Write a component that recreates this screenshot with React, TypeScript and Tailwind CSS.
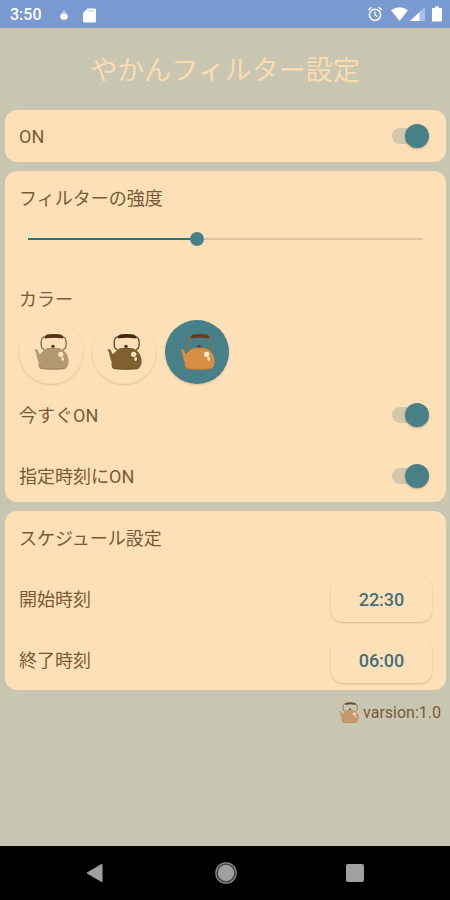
import { useState } from 'react';
import type { CSSProperties, ReactNode } from 'react';

type Palette = { body: string; shade: string; wire: string; grip: string; shine: string };

const kettles: { id: string; label: string; palette: Palette }[] = [
  { id: 'light', label: 'ライト', palette: { body: '#b29772', shade: '#9d8260', wire: '#8a6b4a', grip: '#5a2f14', shine: '#fbe3c3' } },
  { id: 'dark', label: 'ダーク', palette: { body: '#80602f', shade: '#6d4f26', wire: '#65431f', grip: '#4a2410', shine: '#fbe3c3' } },
  { id: 'copper', label: 'カッパー', palette: { body: '#d88e44', shade: '#c67c36', wire: '#8f6b42', grip: '#643c1c', shine: '#fdebd2' } },
];

const footerPalette: Palette = { body: '#c59a6b', shade: '#a97d52', wire: '#7b6248', grip: '#66482c', shine: '#efdcc0' };

function Kettle({ palette, className }: { palette: Palette; className: string }) {
  return (
    <svg viewBox="0 0 105 108" className={className} aria-hidden="true">
      <path
        d="M30 47L24 42C20 34 21 18 25 12Q28 8 36 7H81Q90 8 93 12C97 18 98 34 94 42L88 47"
        fill="none"
        stroke={palette.wire}
        strokeWidth="4"
        strokeLinecap="round"
        strokeLinejoin="round"
      />
      <path d="M32 12C31 5 37 2 45 1Q59 -1 74 1C82 2 89 5 88 12Q86 14 82 13Q60 9 38 13Q33 14 32 12Z" fill={palette.grip} />
      <circle cx="57" cy="37" r="5" fill={palette.grip} />
      <path d="M1 47Q8 44 12 49C14 54 14 59 17 60C24 57 27 49 36 44Q57 38 80 44C94 50 104 64 104 82Q104 97 94 104Q58 108 22 105Q13 98 14 84C11 77 8 68 7 60Q6 52 1 47Z" fill={palette.body} />
      <path d="M14 88Q15 98 23 102Q58 105 94 102L91 106Q57 109 20 105Q12 99 14 88Z" fill={palette.shade} />
      <path d="M36 45Q57 40 80 45" fill="none" stroke={palette.shade} strokeWidth="2" />
      <ellipse cx="80" cy="61" rx="8" ry="8" fill={palette.shine} />
      <ellipse cx="86" cy="75" rx="4" ry="6" fill={palette.shine} />
    </svg>
  );
}

function Card({ children }: { children: ReactNode }) {
  return <section className="rounded-xl bg-[#fee0b8] pl-3.5 pr-[18px]">{children}</section>;
}

function SwitchRow({ id, label }: { id: string; label: string }) {
  const [on, setOn] = useState(true);
  return (
    <div className="flex h-12 items-center justify-between">
      <label htmlFor={id} className="pt-0.5">{label}</label>
      <input
        id={id}
        type="checkbox"
        role="switch"
        checked={on}
        onChange={(e) => setOn(e.target.checked)}
        className="relative h-6 w-9 cursor-pointer appearance-none before:absolute before:inset-x-0 before:top-1 before:h-4 before:rounded-full before:bg-[#d2c8a9] after:absolute after:left-0 after:top-0 after:size-6 after:rounded-full after:bg-[#f1efe6] after:shadow-[0_1px_2px_rgba(80,60,30,0.35)] checked:after:left-[13px] checked:after:bg-[#488088]"
      />
    </div>
  );
}

function TimeRow({ label, time }: { label: string; time: string }) {
  return (
    <div className="flex h-12 items-center justify-between">
      <span className="pt-0.5">{label}</span>
      <button
        type="button"
        aria-label={`${label} ${time}`}
        className="-mr-1 h-[45px] w-[101px] rounded-xl bg-[#fee0b8] pt-0.5 font-medium text-[#44707a] shadow-[0_1px_2px_rgba(120,85,40,0.3)]"
      >
        {time}
      </button>
    </div>
  );
}

function StatusBar() {
  return (
    <div className="flex h-7 items-center justify-between bg-[#7999d1] pl-2.5 pr-2 text-white">
      <div className="flex items-center pt-0.5">
        <span className="w-[50px] text-base font-medium">3:50</span>
        <svg viewBox="0 0 8 12" className="h-3 w-2" aria-hidden="true">
          <path d="M2 4Q4 0 6 4" fill="none" stroke="#dbe6fa" strokeWidth="1" />
          <ellipse cx="4" cy="7.5" rx="3.8" ry="3.2" fill="#fff" />
        </svg>
        <svg viewBox="0 0 13 15" className="ml-[15px] h-[15px] w-[13px]" aria-hidden="true">
          <path d="M4.5 0.5H11.5Q13 0.5 13 2V13Q13 14.5 11.5 14.5H1.5Q0 14.5 0 13V5Z" fill="#fff" />
          <path d="M4.5 3H11" stroke="#a9bfe6" strokeWidth="1" />
        </svg>
      </div>
      <div className="flex items-center">
        <svg viewBox="0 0 16 16" className="size-4" fill="none" stroke="#fff" aria-hidden="true">
          <circle cx="8" cy="8.8" r="5.6" strokeWidth="1.5" />
          <path d="M1.3 4L4.5 1.3M14.7 4L11.5 1.3" strokeWidth="1.5" />
          <path d="M8 5.5V9L10.3 10.8" strokeWidth="1.3" />
        </svg>
        <svg viewBox="0 0 17 14" className="ml-2 h-3.5 w-[17px]" aria-hidden="true">
          <path d="M0 3.2Q8.5 -2.8 17 3.2L8.5 14Z" fill="#fff" />
        </svg>
        <svg viewBox="0 0 15 14" className="ml-0.5 h-3.5 w-[15px]" aria-hidden="true">
          <path d="M0 14L15 0V14Z" fill="#a9bfe5" />
          <path d="M0 14L9.5 5V14Z" fill="#fff" />
        </svg>
        <svg viewBox="0 0 10 16" className="ml-[7px] h-4 w-2.5" aria-hidden="true">
          <path d="M3 0.5H7V2H9Q10 2 10 3V14.5Q10 15.5 9 15.5H1Q0 15.5 0 14.5V3Q0 2 1 2H3Z" fill="#fff" />
        </svg>
      </div>
    </div>
  );
}

export default function App() {
  const [strength, setStrength] = useState(85);
  const [color, setColor] = useState('copper');
  const fill = { '--fill': `${strength / 2}%` } as CSSProperties;

  return (
    <div
      lang="ja"
      className="flex min-h-screen flex-col bg-[#c8c5b0] font-[Roboto,'Noto_Sans_CJK_JP',sans-serif] text-lg text-[#775a37]"
    >
      <StatusBar />
      <header className="flex h-[82px] items-center justify-center pt-1">
        <h1 className="text-[27px] text-[#fbdbb0]">やかんフィルター設定</h1>
      </header>
      <main className="flex flex-1 flex-col gap-[9px] pl-[5px] pr-1">
        <Card>
          <div className="py-0.5">
            <SwitchRow id="power" label="ON" />
          </div>
        </Card>

        <Card>
          <label htmlFor="strength" className="flex h-[54px] items-center pt-0.5">
            フィルターの強度
          </label>
          <div className="flex h-7 items-center pl-[9px] pr-[5px]">
            <input
              id="strength"
              type="range"
              min={0}
              max={200}
              value={strength}
              onChange={(e) => setStrength(Number(e.target.value))}
              style={fill}
              className="h-3.5 w-full cursor-pointer appearance-none bg-[linear-gradient(to_right,#267780_var(--fill),#dcc4a0_var(--fill))] bg-[length:100%_2px] bg-center bg-no-repeat [&::-webkit-slider-thumb]:size-3.5 [&::-webkit-slider-thumb]:appearance-none [&::-webkit-slider-thumb]:rounded-full [&::-webkit-slider-thumb]:bg-[#488088]"
            />
          </div>
          <div role="radiogroup" aria-labelledby="color-heading" className="pt-[31px]">
            <h2 id="color-heading" className="pt-0.5 leading-7">カラー</h2>
            <div className="flex gap-[9px] pt-1.5">
              {kettles.map((k) => (
                <label
                  key={k.id}
                  className="flex size-16 cursor-pointer items-center justify-center rounded-full bg-[#fee0b8] shadow-[0_1px_2px_rgba(120,85,40,0.25)] has-checked:bg-[#478088]"
                >
                  <input
                    type="radio"
                    name="color"
                    aria-label={k.label}
                    checked={color === k.id}
                    onChange={() => setColor(k.id)}
                    className="sr-only"
                  />
                  <Kettle palette={k.palette} className="h-9 w-[35px]" />
                </label>
              ))}
            </div>
          </div>
          <div className="flex flex-col gap-[13px] pb-0.5 pt-[7px]">
            <SwitchRow id="now" label="今すぐON" />
            <SwitchRow id="scheduled" label="指定時刻にON" />
          </div>
        </Card>

        <Card>
          <h2 className="flex h-[54px] items-center pt-0.5">スケジュール設定</h2>
          <div className="flex flex-col gap-[13px] pb-1.5 pt-2.5">
            <TimeRow label="開始時刻" time="22:30" />
            <TimeRow label="終了時刻" time="06:00" />
          </div>
        </Card>

        <footer className="flex items-center justify-end gap-1 pr-[5px] text-base">
          <Kettle palette={footerPalette} className="h-[21px] w-5" />
          <span className="pt-0.5">varsion:1.0</span>
        </footer>
      </main>

      <nav className="flex h-[54px] items-center justify-between bg-black pl-[85px] pr-[84px]">
        <button type="button" aria-label="戻る" className="flex size-[22px] items-center justify-center">
          <svg viewBox="0 0 20 20" className="size-5">
            <path d="M1 10L16 1.2V18.8Z" fill="#a0a0a0" stroke="#a0a0a0" strokeWidth="1" strokeLinejoin="round" />
          </svg>
        </button>
        <button type="button" aria-label="ホーム" className="flex size-[22px] items-center justify-center">
          <svg viewBox="0 0 22 22" className="size-[22px]">
            <circle cx="11" cy="11" r="10.2" fill="#3c3c3c" stroke="#8c8c8c" strokeWidth="1.2" />
            <circle cx="11" cy="11" r="8.2" fill="#a0a0a0" />
          </svg>
        </button>
        <button type="button" aria-label="履歴" className="flex size-[22px] items-center justify-center">
          <svg viewBox="0 0 22 22" className="size-[22px]">
            <rect x="2" y="2" width="18" height="18" rx="2" fill="#a0a0a0" />
          </svg>
        </button>
      </nav>
    </div>
  );
}
